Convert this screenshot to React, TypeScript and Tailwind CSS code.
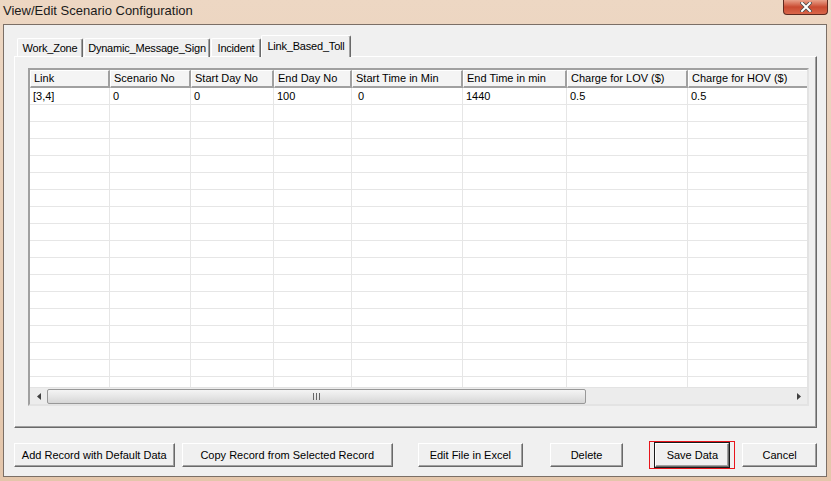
import React from "react";

type Col = { name: string; w: number };

const cols: Col[] = [
  { name: "Link", w: 80 },
  { name: "Scenario No", w: 81 },
  { name: "Start Day No", w: 83 },
  { name: "End Day No", w: 78 },
  { name: "Start Time in Min", w: 111 },
  { name: "End Time in min", w: 104 },
  { name: "Charge for LOV ($)", w: 121 },
  { name: "Charge for HOV ($)", w: 121 },
];

const firstRow = ["[3,4]", "0", "0", "100", " 0", "1440", "0.5", "0.5"];

const tabs = [
  { name: "Work_Zone", w: 66 },
  { name: "Dynamic_Message_Sign", w: 126 },
  { name: "Incident", w: 50 },
];

const emptyRows = Array.from({ length: 17 });

const Btn = ({ label, className = "" }: { label: string; className?: string }) => (
  <button
    className={`h-[24px] bg-[#f0f0f0] border border-t-white border-l-white border-r-[#696969] border-b-[#696969] shadow-[inset_-1px_-1px_0_#a0a0a0] text-[11px] text-black ${className}`}
  >
    {label}
  </button>
);

const App = () => {
  return (
    <div className="w-[831px] h-[481px] flex flex-col bg-gradient-to-b from-[#edd7c3] to-[#e4c6ab] font-['Liberation_Sans',sans-serif] overflow-hidden">
      {/* Title bar */}
      <div className="h-[24px] flex items-start justify-between shrink-0">
        <div className="pl-[3px] pt-[2px] text-[13px] leading-[18px] text-[#1a1a1a]">
          View/Edit Scenario Configuration
        </div>
        <div className="mr-[3px] w-[45px] h-[15px] rounded-b-[4px] border border-t-0 border-[#5e2a20] bg-gradient-to-b from-[#e8a08a] via-[#c94a31] to-[#d9664a] flex items-center justify-center">
          <svg width="12" height="10" viewBox="0 0 12 10">
            <path d="M2 1 L10 9 M10 1 L2 9" stroke="#4a4a4a" strokeWidth="3.6" strokeLinecap="square" />
            <path d="M2 1 L10 9 M10 1 L2 9" stroke="#ffffff" strokeWidth="2" strokeLinecap="square" />
          </svg>
        </div>
      </div>

      {/* Client area */}
      <div className="flex-1 ml-[3px] mr-[4px] mb-[4px] border border-[#7b6f66] bg-[#f0f0f0] flex flex-col pl-[10px] pr-[9px] pt-[11px] text-[11px] text-black">
        {/* Tabs */}
        <div className="h-[21px] flex items-end pl-[3px] relative z-10 -mb-px">
          {tabs.map((t) => (
            <div
              key={t.name}
              style={{ width: t.w }}
              className="h-[19px] mr-px flex items-center justify-center whitespace-nowrap tracking-[-0.2px] border border-b-0 border-t-white border-l-white border-r-[#696969] shadow-[inset_-1px_0_0_#a0a0a0] rounded-t-[2px]"
            >
              {t.name}
            </div>
          ))}
          <div className="w-[90px] h-[22px] -ml-[1px] flex items-start justify-center pt-[2px] whitespace-nowrap tracking-[-0.2px] bg-[#f0f0f0] border border-b-0 border-t-white border-l-white border-r-[#696969] shadow-[inset_-1px_0_0_#a0a0a0] rounded-t-[2px]">
            Link_Based_Toll
          </div>
        </div>

        {/* Tab page */}
        <div className="h-[372px] border border-t-white border-l-white border-r-[#696969] border-b-[#696969] shadow-[inset_-1px_-1px_0_#a0a0a0] pl-[13px] pt-[11px]">
          {/* Grid */}
          <div className="w-[781px] h-[338px] border-2 border-t-[#a0a0a0] border-l-[#a0a0a0] border-r-[#e3e3e3] border-b-[#e3e3e3] flex flex-col bg-white overflow-hidden">
            {/* Header */}
            <div className="flex h-[18px] shrink-0">
              {cols.map((c) => (
                <div
                  key={c.name}
                  style={{ width: c.w }}
                  className="shrink-0 h-full pl-[3px] flex items-center whitespace-nowrap bg-[#f4f4f4] border-t border-l border-t-[#ffffff] border-l-[#ffffff] border-r-2 border-b-2 border-r-[#a0a0a0] border-b-[#a0a0a0]"
                >
                  {c.name}
                </div>
              ))}
            </div>
            {/* Rows */}
            <div className="flex-1 overflow-hidden">
              <div className="flex h-[17px]">
                {cols.map((c, i) => (
                  <div
                    key={c.name}
                    style={{ width: c.w }}
                    className="shrink-0 h-full pl-[3px] flex items-center whitespace-pre border-r border-b border-[#e6e6e6]"
                  >
                    {firstRow[i]}
                  </div>
                ))}
              </div>
              {emptyRows.map((_, r) => (
                <div key={r} className="flex h-[17px]">
                  {cols.map((c) => (
                    <div
                      key={c.name}
                      style={{ width: c.w }}
                      className="shrink-0 h-full border-r border-b border-[#e6e6e6]"
                    />
                  ))}
                </div>
              ))}
            </div>
            {/* Horizontal scrollbar */}
            <div className="h-[17px] shrink-0 flex bg-[#ececec] border-t border-[#e3e3e3]">
              <div className="w-[17px] h-full flex items-center justify-center">
                <svg width="4" height="7" viewBox="0 0 4 7">
                  <path d="M4 0 L0 3.5 L4 7 Z" fill="#404040" />
                </svg>
              </div>
              <div className="w-[539px] h-[15px] mt-px rounded-[2px] border border-[#989898] bg-gradient-to-b from-[#f4f4f4] via-[#e6e6e6] to-[#d6d6d6] flex items-center justify-center">
                <svg width="7" height="7" viewBox="0 0 7 7">
                  <path d="M0.5 0 V7 M3.5 0 V7 M6.5 0 V7" stroke="#666" strokeWidth="1" />
                </svg>
              </div>
              <div className="flex-1" />
              <div className="w-[17px] h-full flex items-center justify-center">
                <svg width="4" height="7" viewBox="0 0 4 7">
                  <path d="M0 0 L4 3.5 L0 7 Z" fill="#404040" />
                </svg>
              </div>
            </div>
          </div>
        </div>

        {/* Buttons */}
        <div className="flex items-center mt-[13px] h-[28px]">
          <Btn label="Add Record with Default Data" className="w-[161px]" />
          <Btn label="Copy Record from Selected Record" className="w-[212px] ml-[7px]" />
          <Btn label="Edit File in Excel" className="w-[105px] ml-[25px]" />
          <Btn label="Delete" className="w-[74px] ml-[27px]" />
          <div className="ml-[26px] w-[86px] h-[28px] border border-[#e8141b] flex items-center justify-center">
            <div className="border border-[#1a1a1a]">
              <Btn label="Save Data" className="w-[74px] h-[22px] block" />
            </div>
          </div>
          <Btn label="Cancel" className="w-[75px] ml-[7px]" />
        </div>
      </div>
    </div>
  );
};

export default App;
